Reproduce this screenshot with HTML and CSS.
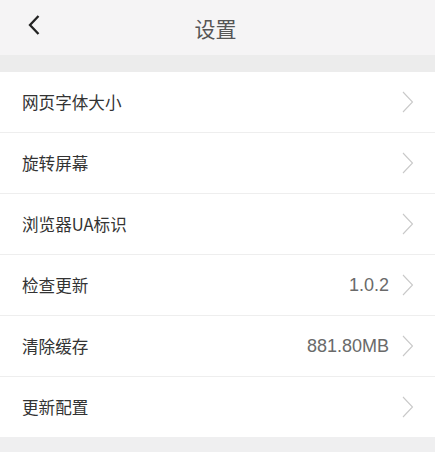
FILE: index.html
```html
<!DOCTYPE html>
<html lang="zh-CN">
<head>
<meta charset="utf-8">
<link rel="stylesheet" href="styles.css">
</head>
<body>
<header class="topbar">
  <span class="back">
    <svg width="14" height="22" viewBox="0 0 14 22"><path d="M11.5 2 L3 11 L11.5 20" fill="none" stroke="#222" stroke-width="2.3"/></svg>
  </span>
  <h1 class="title">设置</h1>
</header>
<div class="band"></div>
<ul class="list">
  <li class="row"><span class="label">网页字体大小</span><span class="right"><svg class="chev" width="12" height="22" viewBox="0 0 12 22"><path d="M1 1 L10.5 11 L1 21" fill="none" stroke="#c9c9c9" stroke-width="1.1"/></svg></span></li>
  <li class="row"><span class="label">旋转屏幕</span><span class="right"><svg class="chev" width="12" height="22" viewBox="0 0 12 22"><path d="M1 1 L10.5 11 L1 21" fill="none" stroke="#c9c9c9" stroke-width="1.1"/></svg></span></li>
  <li class="row"><span class="label">浏览器UA标识</span><span class="right"><svg class="chev" width="12" height="22" viewBox="0 0 12 22"><path d="M1 1 L10.5 11 L1 21" fill="none" stroke="#c9c9c9" stroke-width="1.1"/></svg></span></li>
  <li class="row"><span class="label">检查更新</span><span class="right"><span class="value">1.0.2</span><svg class="chev" width="12" height="22" viewBox="0 0 12 22"><path d="M1 1 L10.5 11 L1 21" fill="none" stroke="#c9c9c9" stroke-width="1.1"/></svg></span></li>
  <li class="row"><span class="label">清除缓存</span><span class="right"><span class="value">881.80MB</span><svg class="chev" width="12" height="22" viewBox="0 0 12 22"><path d="M1 1 L10.5 11 L1 21" fill="none" stroke="#c9c9c9" stroke-width="1.1"/></svg></span></li>
  <li class="row"><span class="label">更新配置</span><span class="right"><svg class="chev" width="12" height="22" viewBox="0 0 12 22"><path d="M1 1 L10.5 11 L1 21" fill="none" stroke="#c9c9c9" stroke-width="1.1"/></svg></span></li>
</ul>
</body>
</html>
```

FILE: styles.css
```css
html, body {
  margin: 0;
  padding: 0;
  background: #efeff0;
  font-family: "Liberation Sans", "Noto Sans CJK SC", sans-serif;
}
.topbar {
  position: relative;
  height: 55px;
  background: #f5f4f5;
  display: flex;
  align-items: center;
  justify-content: center;
}
.back {
  position: absolute;
  left: 27px;
  top: 14px;
  display: flex;
}
.title {
  margin: 0;
  font-size: 21px;
  font-weight: 400;
  color: #555;
  font-family: "Noto Sans CJK SC", sans-serif;
  transform: translateX(-2px);
}
.band {
  height: 17px;
  background: #ececec;
}
.list {
  list-style: none;
  margin: 0;
  padding: 0;
  background: #fff;
}
.row {
  height: 60px;
  border-bottom: 1px solid #eeeeee;
  display: flex;
  align-items: center;
  justify-content: space-between;
  padding: 0 21px 0 22px;
}
.row:last-child {
  border-bottom: none;
}
.label {
  font-family: "Noto Sans CJK SC", sans-serif;
  font-size: 16.6px;
  color: #333;
}
.right {
  display: flex;
  align-items: center;
  gap: 13px;
}
.value {
  font-family: "Liberation Sans", sans-serif;
  font-size: 18px;
  color: #6a6a6a;
}
.chev {
  display: block;
}
```
